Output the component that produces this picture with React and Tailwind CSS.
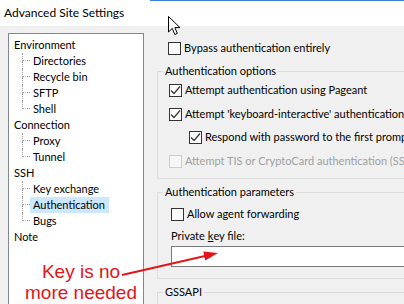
import React from "react";

const tree = [
  { label: "Environment" },
  { label: "Directories", child: true },
  { label: "Recycle bin", child: true },
  { label: "SFTP", child: true },
  { label: "Shell", child: true, last: true },
  { label: "Connection" },
  { label: "Proxy", child: true },
  { label: "Tunnel", child: true, last: true },
  { label: "SSH" },
  { label: "Key exchange", child: true },
  { label: "Authentication", child: true, selected: true },
  { label: "Bugs", child: true, last: true },
  { label: "Note" },
];

function TreeRow({ item }) {
  if (!item.child) {
    return (
      <div className="h-[16px] flex items-center pl-[5px]">
        <span>{item.label}</span>
      </div>
    );
  }
  return (
    <div className="h-[16px] flex items-stretch">
      <div className="ml-[13px] w-[8px] flex flex-col">
        <div className="h-[8px] border-l border-b border-dotted border-[#a0a0a0]" />
        <div className={`flex-1 border-l border-dotted ${item.last ? "border-transparent" : "border-[#a0a0a0]"}`} />
      </div>
      <span className={`flex items-center pl-[3px] pr-[4px] ${item.selected ? "bg-[#cce8ff]" : ""}`}>
        {item.label}
      </span>
    </div>
  );
}

function Box({ checked, disabled }) {
  return (
    <span
      className={`w-[13px] h-[13px] border flex items-center justify-center shrink-0 ${
        disabled ? "border-[#cccccc] bg-[#f6f6f6]" : "border-[#333333] bg-white"
      }`}
    >
      {checked && (
        <svg width="11" height="11" viewBox="0 0 11 11">
          <path d="M1 5.5 L4 8.5 L10 1.5" fill="none" stroke="#333333" strokeWidth="1.2" />
        </svg>
      )}
    </span>
  );
}

function Check({ label, checked, disabled, className = "" }) {
  return (
    <div className={`h-[16px] flex items-center gap-[3px] whitespace-nowrap ${className}`}>
      <Box checked={checked} disabled={disabled} />
      <span className={disabled ? "text-[#a0a0a0]" : ""}>{label}</span>
    </div>
  );
}

function Group({ title, className = "", children }) {
  return (
    <fieldset className={`border border-[#dcdcdc] ${className}`}>
      <legend className="ml-[5px] px-[2px] leading-[16px]">{title}</legend>
      {children}
    </fieldset>
  );
}

export default function App() {
  return (
    <div className="relative w-[404px] h-[304px] overflow-hidden bg-[#f0f0f0] text-[11px] leading-[16px] text-black font-['Lato',sans-serif]">
      <div className="h-[26px] bg-white flex flex-col">
        <div className="ml-[150px] h-px bg-[#3b82d6]" />
        <div className="flex-1 flex items-center pl-[4px] pb-px text-[12px]">Advanced Site Settings</div>
      </div>

      <div className="flex">
        <div className="mt-[7px] ml-[8px] w-[136px] h-[290px] shrink-0 bg-white border border-[#828790] pt-[3px]">
          {tree.map((item) => (
            <TreeRow key={item.label} item={item} />
          ))}
        </div>

        <div className="ml-[13px] w-[300px] shrink-0 pt-[14px]">
          <Check label="Bypass authentication entirely" className="ml-[11px]" />

          <Group title="Authentication options" className="mt-[7px] pb-[9px]">
            <div className="pl-[11px]">
              <Check label="Attempt authentication using Pageant" checked className="mt-[3px]" />
              <Check label="Attempt 'keyboard-interactive' authentication (SSH-2)" checked className="mt-[8px]" />
              <Check label="Respond with password to the first prompt" checked className="mt-[7px] ml-[20px]" />
              <Check label="Attempt TIS or CryptoCard authentication (SSH-1)" disabled className="mt-[8px]" />
            </div>
          </Group>

          <Group title="Authentication parameters" className="mt-[5px] pb-[11px]">
            <div className="pl-[13px]">
              <Check label="Allow agent forwarding" className="mt-[6px]" />
              <div className="mt-[6px] h-[16px] flex items-center whitespace-nowrap">
                Private <span className="underline ml-[3px]">k</span>ey file:
              </div>
              <div className="mt-[2px] h-[21px] bg-white border border-[#7a7a7a]" />
            </div>
          </Group>

          <Group title="GSSAPI" className="mt-[5px] h-[60px]" />
        </div>
      </div>

      <svg className="absolute left-[168px] top-[16px]" width="14" height="20" viewBox="0 0 14 20">
        <path d="M0.5 0.5 L0.5 16 L4.3 12.4 L6.8 18.5 L9.3 17.4 L6.9 11.6 L12 11.6 Z" fill="white" stroke="black" strokeWidth="1" />
      </svg>

      <div className="absolute left-[20px] top-[261px] w-[122px] text-center text-[19px] leading-[21px] text-[#e3151a] font-['Liberation_Sans',Arial,sans-serif]">
        Key is no
        <br />
        more needed
      </div>

      <svg className="absolute left-0 top-0 pointer-events-none" width="404" height="304">
        <line x1="122" y1="275" x2="205" y2="256" stroke="#e3151a" strokeWidth="2" />
        <polygon points="218,253 205.3,260.4 203.3,251.6" fill="#e3151a" />
      </svg>
    </div>
  );
}
